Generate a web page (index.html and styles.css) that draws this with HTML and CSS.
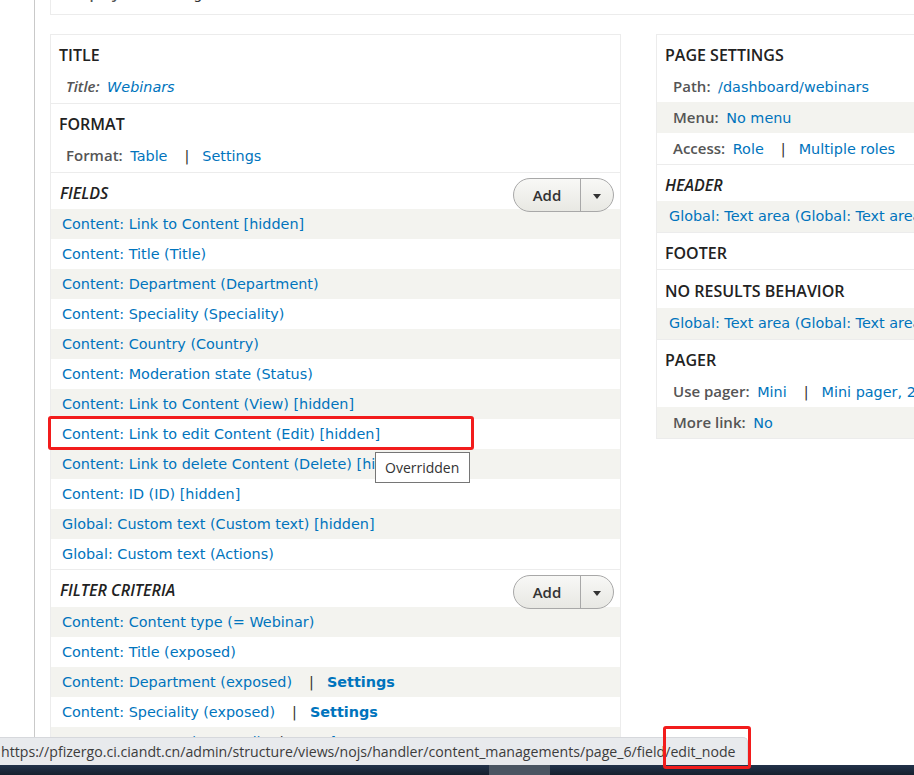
FILE: index.html
```html
<!DOCTYPE html>
<html lang="en">
<head>
<meta charset="utf-8">
<title>Views UI - Webinars</title>
<link rel="stylesheet" href="styles.css">
</head>
<body>
<div class="main">
  <div class="top-box"><span class="label">Display name:</span> <span class="plain">Page</span></div>
  <div class="columns">
    <div class="box box-left">
      <div class="section">
        <h3 class="sec-head">Title</h3>
        <div class="detail"><span class="label italic">Title:</span> <a class="link italic">Webinars</a></div>
      </div>
      <div class="section">
        <h3 class="sec-head">Format</h3>
        <div class="detail"><span class="label">Format:</span> <a class="link">Table</a><span class="sep">|</span><a class="link">Settings</a></div>
      </div>
      <div class="section">
        <div class="sec-bar">
          <h3 class="sec-head italic">Fields</h3>
          <div class="add-btn"><span class="add-main">Add</span><span class="add-drop"><span class="caret"></span></span></div>
        </div>
        <ul class="rows">
          <li class="row"><a class="link">Content: Link to Content [hidden]</a></li>
          <li class="row"><a class="link">Content: Title (Title)</a></li>
          <li class="row"><a class="link">Content: Department (Department)</a></li>
          <li class="row"><a class="link">Content: Speciality (Speciality)</a></li>
          <li class="row"><a class="link">Content: Country (Country)</a></li>
          <li class="row"><a class="link">Content: Moderation state (Status)</a></li>
          <li class="row"><a class="link">Content: Link to Content (View) [hidden]</a></li>
          <li class="row"><a class="link">Content: Link to edit Content (Edit) [hidden]</a></li>
          <li class="row"><a class="link">Content: Link to delete Content (Delete) [hidden]</a></li>
          <li class="row"><a class="link">Content: ID (ID) [hidden]</a></li>
          <li class="row"><a class="link">Global: Custom text (Custom text) [hidden]</a></li>
          <li class="row"><a class="link">Global: Custom text (Actions)</a></li>
        </ul>
      </div>
      <div class="section last">
        <div class="sec-bar sec-bar-tall">
          <h3 class="sec-head italic">Filter criteria</h3>
          <div class="add-btn"><span class="add-main">Add</span><span class="add-drop"><span class="caret"></span></span></div>
        </div>
        <ul class="rows">
          <li class="row"><a class="link">Content: Content type (= Webinar)</a></li>
          <li class="row"><a class="link">Content: Title (exposed)</a></li>
          <li class="row"><a class="link">Content: Department (exposed)</a><span class="sep">|</span><a class="link bold">Settings</a></li>
          <li class="row"><a class="link">Content: Speciality (exposed)</a><span class="sep">|</span><a class="link bold">Settings</a></li>
          <li class="row"><a class="link">Content: Country (exposed)</a><span class="sep">|</span><a class="link bold">Settings</a></li>
          <li class="row"><a class="link">Content: Moderation state (exposed)</a></li>
        </ul>
      </div>
    </div>
    <div class="box box-right">
      <div class="section">
        <h3 class="sec-head">Page settings</h3>
        <ul class="rows rows-r">
          <li class="row"><span class="label">Path:</span> <a class="link">/dashboard/webinars</a></li>
          <li class="row"><span class="label">Menu:</span> <a class="link">No menu</a></li>
          <li class="row"><span class="label">Access:</span> <a class="link">Role</a><span class="sep">|</span><a class="link">Multiple roles</a></li>
        </ul>
      </div>
      <div class="section">
        <h3 class="sec-head italic">Header</h3>
        <ul class="rows rows-r">
          <li class="row row-link"><a class="link">Global: Text area (Global: Text area)</a></li>
        </ul>
      </div>
      <div class="section">
        <h3 class="sec-head">Footer</h3>
      </div>
      <div class="section">
        <h3 class="sec-head sec-head-tall">No results behavior</h3>
        <ul class="rows rows-r">
          <li class="row row-link"><a class="link">Global: Text area (Global: Text area)</a></li>
        </ul>
      </div>
      <div class="section last">
        <h3 class="sec-head">Pager</h3>
        <ul class="rows rows-r">
          <li class="row"><span class="label">Use pager:</span> <a class="link">Mini</a><span class="sep">|</span><a class="link">Mini pager, 20 items</a></li>
          <li class="row"><span class="label">More link:</span> <a class="link">No</a></li>
        </ul>
      </div>
    </div>
  </div>
</div>

<div class="tooltip">Overridden</div>
<div class="mark mark-row"></div>
<div class="statusbar">https://pfizergo.ci.ciandt.cn/admin/structure/views/nojs/handler/content_managements/page_6/field/edit_node</div>
<div class="taskbar"><span class="task-active"></span></div>
<div class="mark mark-url"></div>
</body>
</html>
```

FILE: styles.css
```css
html, body {
  margin: 0;
  padding: 0;
}

body {
  width: 914px;
  height: 775px;
  overflow: hidden;
  background: #ffffff;
  font-family: "DejaVu Sans", Verdana, sans-serif;
  font-size: 14.4px;
  color: #333333;
  position: relative;
}

.main {
  margin-left: 34px;
  border-left: 1px solid #c9c9c9;
  padding-left: 15px;
  height: 775px;
  box-sizing: border-box;
}

.top-box {
  margin-top: -17px;
  width: 1000px;
  height: 32px;
  box-sizing: border-box;
  border: 1px solid #ececec;
  border-top: none;
  padding: 0 0 0 16px;
  line-height: 20px;
  overflow: hidden;
}

.plain {
  color: #333333;
}

.columns {
  display: flex;
  align-items: flex-start;
  gap: 35px;
  margin-top: 19px;
}

.box {
  border: 1px solid #ececec;
  background: #ffffff;
  flex: none;
}

.box-left {
  width: 569px;
}

.box-right {
  width: 400px;
}

.section {
  border-bottom: 1px solid #ececec;
}

.section.last {
  border-bottom: none;
}

.sec-head {
  margin: 0;
  padding: 10px 8px 6px;
  height: 36px;
  box-sizing: border-box;
  line-height: 20px;
  font-family: "Open Sans", sans-serif;
  font-weight: 600;
  font-size: 16px;
  color: #222222;
  text-transform: uppercase;
}

.sec-head-tall {
  height: 38px;
  padding-top: 11px;
}

.italic {
  font-style: italic;
}

.sec-bar {
  display: flex;
  justify-content: space-between;
  align-items: flex-start;
  height: 36px;
}

.sec-bar-tall {
  height: 37px;
}

.sec-bar .sec-head {
  padding-left: 9px;
}

.detail {
  height: 30px;
  line-height: 30px;
  padding: 0 0 2px 15px;
  overflow: hidden;
}

.label {
  font-family: "Open Sans", sans-serif;
  font-weight: 600;
  font-size: 15px;
  color: #555555;
  margin-right: 3px;
}

.link {
  color: #0074bd;
  text-decoration: none;
}

.link.bold {
  font-weight: bold;
}

.sep {
  color: #333333;
  margin: 0 13px 0 17px;
}

.rows {
  list-style: none;
  margin: 0;
  padding: 0;
}

.row {
  height: 30px;
  line-height: 30px;
  padding-left: 11px;
  white-space: nowrap;
  overflow: hidden;
}

.row:nth-child(odd) {
  background: #f3f3ef;
}

.rows-r .row {
  height: 31px;
  line-height: 31px;
  padding-left: 16px;
}

.rows-r .row:nth-child(odd) {
  background: #ffffff;
}

.rows-r .row:nth-child(even) {
  background: #f3f3ef;
}

.rows-r .row.row-link {
  background: #f3f3ef;
  padding-left: 12px;
}

.add-btn {
  display: flex;
  margin: 5px 6px 0 0;
  height: 34px;
  box-sizing: border-box;
  border: 1px solid #a8a8a8;
  border-radius: 18px;
  background: linear-gradient(#f8f8f6, #e8e8e3);
  overflow: hidden;
}

.add-main {
  width: 66px;
  border-right: 1px solid #a8a8a8;
  text-align: center;
  line-height: 32px;
  font-family: "Open Sans", sans-serif;
  font-weight: 600;
  font-size: 15px;
  color: #333333;
}

.add-drop {
  width: 32px;
  display: flex;
  align-items: center;
  justify-content: center;
}

.caret {
  width: 0;
  height: 0;
  border-left: 4.5px solid transparent;
  border-right: 4.5px solid transparent;
  border-top: 5px solid #333333;
  margin-top: 3px;
}

.tooltip {
  position: absolute;
  left: 375px;
  top: 452px;
  width: 95px;
  height: 31px;
  box-sizing: border-box;
  border: 1px solid #767676;
  background: #ffffff;
  font-family: "Open Sans", sans-serif;
  font-size: 14px;
  color: #333333;
  line-height: 29px;
  padding-left: 9px;
}

.mark {
  position: absolute;
  border: 3px solid #f21c1c;
  border-radius: 3px;
  box-sizing: border-box;
}

.mark-row {
  left: 48px;
  top: 416px;
  width: 426px;
  height: 34px;
}

.mark-url {
  left: 663px;
  top: 726px;
  width: 88px;
  height: 43px;
}

.statusbar {
  position: absolute;
  left: 0;
  top: 737px;
  width: 748px;
  height: 28px;
  box-sizing: border-box;
  background: #e8eaed;
  border-top: 1px solid #d6d8dc;
  border-right: 1px solid #d6d8dc;
  border-top-right-radius: 5px;
  font-family: "Open Sans", sans-serif;
  font-size: 14.15px;
  line-height: 27px;
  color: #3c3c3c;
  padding-left: 1px;
  white-space: nowrap;
  overflow: hidden;
}

.taskbar {
  position: absolute;
  left: 0;
  top: 765px;
  width: 914px;
  height: 10px;
  background: linear-gradient(#22324a, #15202e);
}

.task-active {
  position: absolute;
  left: 489px;
  top: 0;
  width: 61px;
  height: 10px;
  background: #4a5562;
}
```
